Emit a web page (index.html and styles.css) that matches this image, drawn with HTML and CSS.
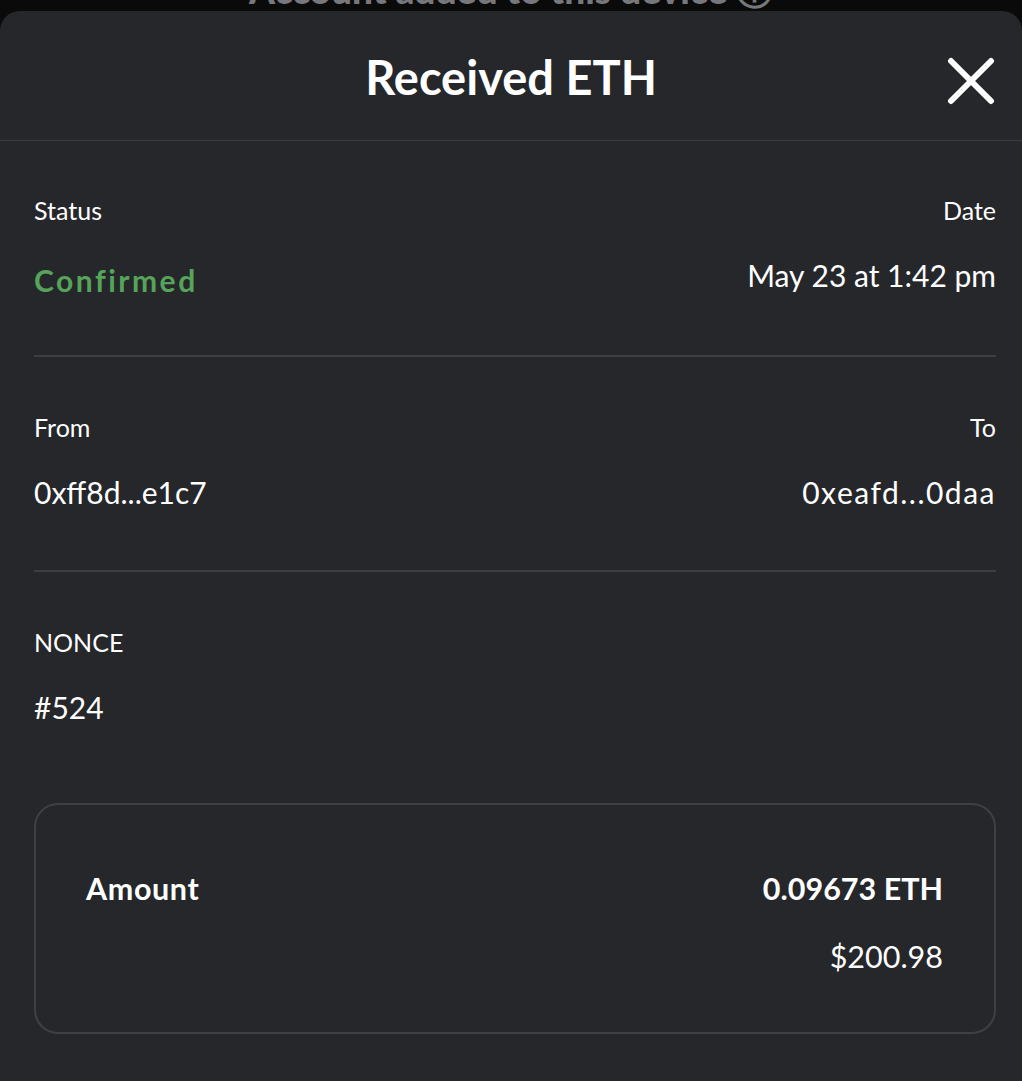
FILE: index.html
```html
<!DOCTYPE html>
<html lang="en">
<head>
<meta charset="utf-8">
<title>Received ETH</title>
<link rel="stylesheet" href="styles.css">
</head>
<body>
<div class="behind">
  <span class="behind-text">Account added to this device ⓘ</span>
</div>
<div class="sheet">
  <header class="sheet-header">
    <h1 class="sheet-title">Received ETH</h1>
    <button class="close" aria-label="Close">
      <svg width="48" height="48" viewBox="0 0 48 48">
        <path d="M4 4 L44 44 M44 4 L4 44" stroke="#fff" stroke-width="6" stroke-linecap="round" fill="none"/>
      </svg>
    </button>
  </header>
  <main class="sheet-body">
    <section class="row">
      <div class="col">
        <div class="label">Status</div>
        <div class="value confirmed">Confirmed</div>
      </div>
      <div class="col right">
        <div class="label">Date</div>
        <div class="value">May 23 at 1:42 pm</div>
      </div>
    </section>
    <hr class="divider">
    <section class="row">
      <div class="col">
        <div class="label">From</div>
        <div class="value">0xff8d...e1c7</div>
      </div>
      <div class="col right">
        <div class="label">To</div>
        <div class="value addr-wide">0xeafd...0daa</div>
      </div>
    </section>
    <hr class="divider">
    <section class="row">
      <div class="col">
        <div class="label">NONCE</div>
        <div class="value">#524</div>
      </div>
    </section>
    <section class="amount-card">
      <div class="amount-row">
        <span class="amount-label">Amount</span>
        <span class="amount-eth">0.09673 ETH</span>
      </div>
      <div class="amount-fiat">$200.98</div>
    </section>
  </main>
</div>
</body>
</html>
```
FILE: styles.css
```css
* { box-sizing: border-box; }
html, body {
  margin: 0;
  padding: 0;
  background: #0a0a0b;
  font-family: "Lato", "Liberation Sans", sans-serif;
  color: #ffffff;
}
body { height: 1081px; overflow: hidden; }

.behind {
  height: 11px;
  overflow: hidden;
  text-align: center;
}
.behind-text {
  display: block;
  font-size: 37px;
  line-height: 36px;
  font-weight: 900;
  color: #77787c;
  margin-top: -28px;
}

.sheet {
  background: #25272b;
  border-radius: 20px 20px 0 0;
  min-height: 1070px;
}

.sheet-header {
  position: relative;
  height: 130px;
  border-bottom: 1px solid #3a3d41;
  display: flex;
  align-items: center;
  justify-content: center;
}
.sheet-title {
  margin: 0;
  font-size: 47px;
  font-weight: 700;
  letter-spacing: 0;
  padding-top: 2px;
}
.close {
  position: absolute;
  right: 27px;
  top: 46px;
  background: none;
  border: 0;
  padding: 0;
  width: 48px;
  height: 48px;
  display: flex;
}

.sheet-body {
  padding: 55px 26px 0 34px;
}

.row {
  display: flex;
  justify-content: space-between;
}
.col { display: flex; flex-direction: column; }
.col.right { align-items: flex-end; text-align: right; }

.label {
  font-size: 25px;
  line-height: 28px;
  font-weight: 400;
}
.value {
  margin-top: 33px;
  font-size: 30px;
  line-height: 36px;
  font-weight: 400;
}
.value.addr-wide { letter-spacing: 1.5px; }
.value.confirmed {
  color: #55a45a;
  font-weight: 700;
  letter-spacing: 2.5px;
  margin-top: 38px;
  margin-bottom: -3px;
}

.divider {
  border: 0;
  height: 2px;
  background: #3b3e42;
  margin: 60px 0 56px;
}

.amount-card {
  margin-top: 78px;
  border: 2px solid #3d4044;
  border-radius: 24px;
  padding: 65px 51px 58px 50px;
}
.amount-row {
  display: flex;
  justify-content: space-between;
  align-items: baseline;
}
.amount-label,
.amount-eth {
  font-size: 30.5px;
  line-height: 36px;
  font-weight: 700;
}
.amount-label { letter-spacing: 0.6px; }
.amount-fiat {
  margin-top: 32px;
  text-align: right;
  font-size: 30.5px;
  line-height: 36px;
}
```
